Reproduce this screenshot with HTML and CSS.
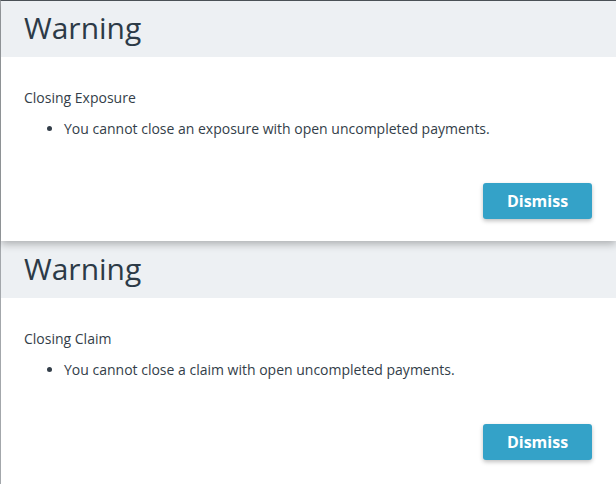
FILE: index.html
```html
<!DOCTYPE html>
<html>
<head>
<meta charset="utf-8">
<link rel="stylesheet" href="styles.css">
</head>
<body>
<div class="page">
  <section class="dialog dialog-top">
    <header class="dialog-header"><h1 class="dialog-title">Warning</h1></header>
    <div class="dialog-body">
      <p class="message-title">Closing Exposure</p>
      <ul class="message-list">
        <li>You cannot close an exposure with open uncompleted payments.</li>
      </ul>
      <div class="dialog-actions"><button class="btn-dismiss">Dismiss</button></div>
    </div>
  </section>
  <section class="dialog">
    <header class="dialog-header"><h1 class="dialog-title">Warning</h1></header>
    <div class="dialog-body">
      <p class="message-title">Closing Claim</p>
      <ul class="message-list">
        <li>You cannot close a claim with open uncompleted payments.</li>
      </ul>
      <div class="dialog-actions"><button class="btn-dismiss">Dismiss</button></div>
    </div>
  </section>
</div>
</body>
</html>
```

FILE: styles.css
```css
html, body {
  margin: 0;
  padding: 0;
  height: 100%;
  overflow: hidden;
  background: #ffffff;
}
body {
  font-family: "Open Sans", "Liberation Sans", sans-serif;
  color: #333e49;
}
.page {
  height: 100%;
  box-sizing: border-box;
  border-top: 1px solid #50565c;
  border-left: 1px solid #a3a7ab;
  display: flex;
  flex-direction: column;
}
.dialog {
  background: #ffffff;
  height: 241px;
  flex: none;
  display: flex;
  flex-direction: column;
}
.dialog-top {
  height: 240px;
  position: relative;
  z-index: 2;
  box-shadow: 0 3px 8px rgba(0, 0, 0, 0.28);
}
.dialog-header {
  background: #edf0f3;
  padding: 0 23px 2px;
  box-sizing: border-box;
  display: flex;
  align-items: center;
}
.dialog-top .dialog-header {
  height: 56px;
}
.dialog:not(.dialog-top) .dialog-header {
  height: 57px;
}
.dialog-title {
  margin: 0;
  font-size: 30px;
  font-weight: 400;
  line-height: 40px;
  color: #2c3a47;
}
.dialog-body {
  padding: 31px 23px 0;
}
.message-title {
  margin: 0;
  font-size: 14px;
  line-height: 20px;
}
.message-list {
  margin: 11px 0 0;
  padding-left: 40px;
  font-size: 14px;
  line-height: 20px;
}
.dialog-actions {
  display: flex;
  justify-content: flex-end;
  margin-top: 44px;
  margin-right: 1px;
}
.btn-dismiss {
  font-family: "Open Sans", "Liberation Sans", sans-serif;
  font-size: 16px;
  font-weight: 700;
  color: #ffffff;
  background: #34a2c8;
  border: none;
  border-radius: 3px;
  width: 109px;
  height: 36px;
  padding: 0;
  box-shadow: 0 2px 4px rgba(0, 0, 0, 0.25);
}
```
